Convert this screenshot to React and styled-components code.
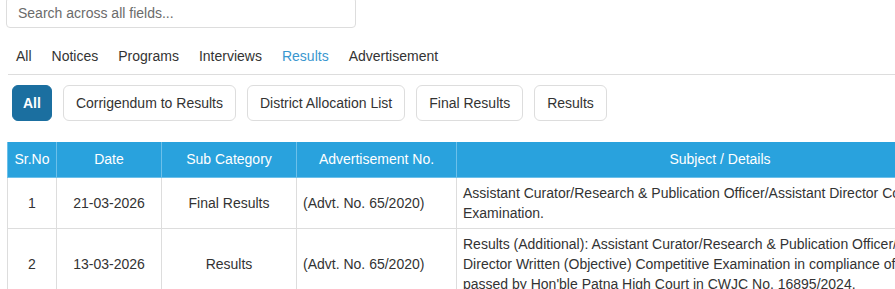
import React from "react";
import styled, { createGlobalStyle } from "styled-components";

const tabs = ["All", "Notices", "Programs", "Interviews", "Results", "Advertisement"];
const filters = [
  "All",
  "Corrigendum to Results",
  "District Allocation List",
  "Final Results",
  "Results",
];

const rows = [
  {
    no: 1,
    date: "21-03-2026",
    sub: "Final Results",
    advt: "(Advt. No. 65/2020)",
    subject:
      "Assistant Curator/Research & Publication Officer/Assistant Director Competitive Examination.",
  },
  {
    no: 2,
    date: "13-03-2026",
    sub: "Results",
    advt: "(Advt. No. 65/2020)",
    subject:
      "Results (Additional): Assistant Curator/Research & Publication Officer/Assistant Director Written (Objective) Competitive Examination in compliance of the order passed by Hon'ble Patna High Court in CWJC No. 16895/2024.",
  },
];

const App = () => {
  return (
    <Page>
      <GlobalStyle />
      <SearchInput placeholder="Search across all fields..." />
      <TabBar>
        {tabs.map((t) => (
          <Tab key={t} $active={t === "Results"}>
            {t}
          </Tab>
        ))}
      </TabBar>
      <FilterRow>
        {filters.map((f, i) => (
          <FilterButton key={f + i} $active={i === 0}>
            {f}
          </FilterButton>
        ))}
      </FilterRow>
      <Table>
        <colgroup>
          <col style={{ width: 49 }} />
          <col style={{ width: 105 }} />
          <col style={{ width: 135 }} />
          <col style={{ width: 160 }} />
          <col style={{ width: 527 }} />
          <col style={{ width: 120 }} />
        </colgroup>
        <thead>
          <tr>
            <Th>Sr.No</Th>
            <Th>Date</Th>
            <Th>Sub Category</Th>
            <Th>Advertisement No.</Th>
            <Th>Subject / Details</Th>
            <Th>View</Th>
          </tr>
        </thead>
        <tbody>
          {rows.map((r) => (
            <tr key={r.no}>
              <Td>{r.no}</Td>
              <Td>{r.date}</Td>
              <Td>{r.sub}</Td>
              <Td $left>{r.advt}</Td>
              <Td $left>{r.subject}</Td>
              <Td>View</Td>
            </tr>
          ))}
        </tbody>
      </Table>
    </Page>
  );
};

export default App;

const GlobalStyle = createGlobalStyle`
  html, body {
    margin: 0;
    padding: 0;
    background: #fff;
    overflow: hidden;
  }
  body {
    font-family: "Liberation Sans", Arial, sans-serif;
    font-size: 14px;
    color: #333;
  }
`;

const Page = styled.div`
  width: 1200px;
  padding: 0 0 0 6px;
  margin-top: -3px;
`;

const SearchInput = styled.input`
  display: block;
  box-sizing: border-box;
  width: 350px;
  height: 31px;
  padding: 6px 11px;
  border: 1px solid #ddd;
  border-radius: 4px;
  font-family: "Liberation Sans", Arial, sans-serif;
  font-size: 14px;
  color: #333;
  outline: none;
  &::placeholder {
    color: #6b6b6b;
  }
`;

const TabBar = styled.div`
  display: flex;
  margin-top: 9px;
  margin-left: 2px;
  border-bottom: 1px solid #ddd;
`;

const Tab = styled.div`
  padding: 9px 10px 8px;
  margin-left: ${(p) => (p.children === "All" ? "-2px" : "0")};
  line-height: 20px;
  color: ${(p) => (p.$active ? "#3a97cf" : "#333")};
`;

const FilterRow = styled.div`
  display: flex;
  gap: 11px;
  padding: 10px 0 0 6px;
`;

const FilterButton = styled.div`
  box-sizing: border-box;
  height: 36px;
  display: flex;
  align-items: center;
  padding: 0 ${(p) => (p.$active ? "10px" : "12px")};
  border-radius: 6px;
  border: 1px solid ${(p) => (p.$active ? "#1b6fa0" : "#ddd")};
  background: ${(p) => (p.$active ? "#1b6fa0" : "#fff")};
  color: ${(p) => (p.$active ? "#fff" : "#333")};
  font-weight: ${(p) => (p.$active ? "bold" : "normal")};
`;

const Table = styled.table`
  margin-top: 21px;
  margin-left: 1px;
  border-collapse: collapse;
  table-layout: fixed;
  width: 1096px;
`;

const Th = styled.th`
  background: #29a2dd;
  color: #fff;
  font-weight: normal;
  height: 35px;
  padding: 0 6px;
  text-align: center;
  border: 1px solid #6cc0ea;
  border-top: none;
  box-sizing: border-box;
`;

const Td = styled.td`
  border: 1px solid #ddd;
  padding: 5px 6px;
  line-height: 20px;
  text-align: ${(p) => (p.$left ? "left" : "center")};
  vertical-align: middle;
`;
